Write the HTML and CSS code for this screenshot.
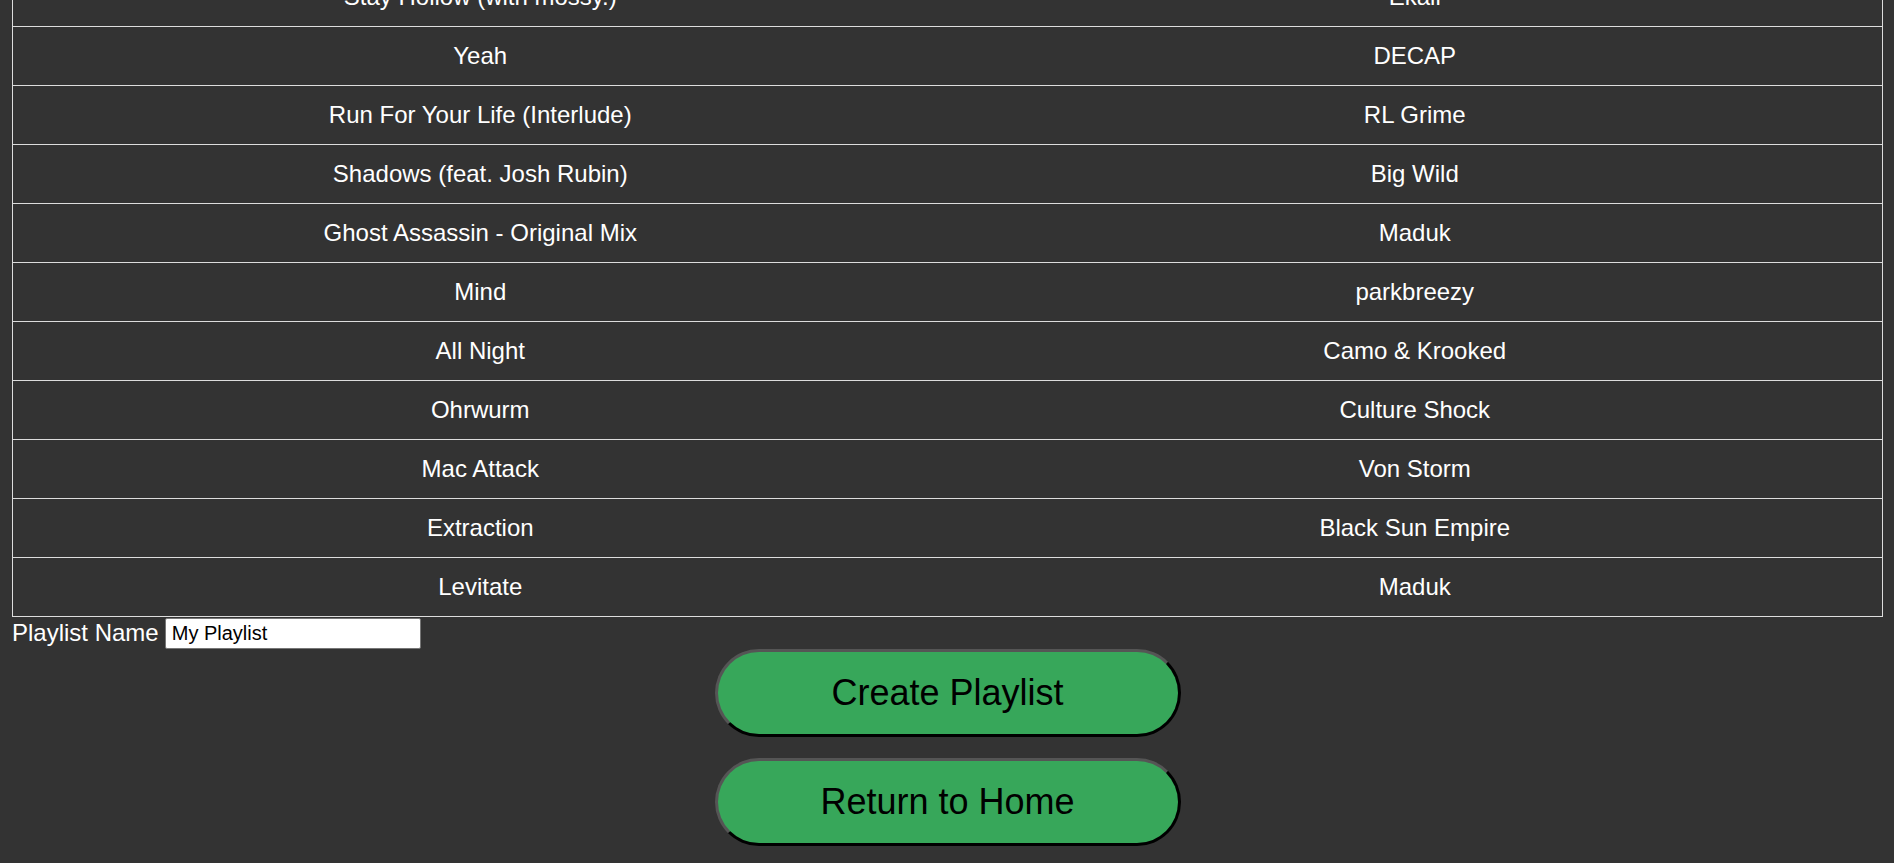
FILE: index.html
```html
<!DOCTYPE html>
<html>
<head>
<meta charset="utf-8">
<title>Playlist</title>
<link rel="stylesheet" href="styles.css">
</head>
<body>
<div class="page">
  <table class="tracks">
    <tbody>
      <tr><td>Stay Hollow (with mossy.)</td><td>Ekali</td></tr>
      <tr><td>Yeah</td><td>DECAP</td></tr>
      <tr><td>Run For Your Life (Interlude)</td><td>RL Grime</td></tr>
      <tr><td>Shadows (feat. Josh Rubin)</td><td>Big Wild</td></tr>
      <tr><td>Ghost Assassin - Original Mix</td><td>Maduk</td></tr>
      <tr><td>Mind</td><td>parkbreezy</td></tr>
      <tr><td>All Night</td><td>Camo &amp; Krooked</td></tr>
      <tr><td>Ohrwurm</td><td>Culture Shock</td></tr>
      <tr><td>Mac Attack</td><td>Von Storm</td></tr>
      <tr><td>Extraction</td><td>Black Sun Empire</td></tr>
      <tr><td>Levitate</td><td>Maduk</td></tr>
    </tbody>
  </table>
  <div class="name-row">
    <label class="name-label" for="pname">Playlist Name</label>
    <input class="name-input" id="pname" type="text" value="My Playlist">
  </div>
  <div class="actions">
    <button class="pill">Create Playlist</button>
    <button class="pill">Return to Home</button>
  </div>
</div>
</body>
</html>
```

FILE: styles.css
```css
html, body {
  margin: 0;
  padding: 0;
  background: #333333;
}
body {
  font-family: "Liberation Sans", Arial, sans-serif;
  font-size: 24px;
  color: #ffffff;
  overflow: hidden;
}
.page {
  padding: 0 11px 0 12px;
}
.tracks {
  width: 100%;
  border-collapse: collapse;
  border: 1px solid #dddddd;
  margin-top: -33px;
  table-layout: fixed;
}
.tracks td {
  width: 50%;
  text-align: center;
  padding: 15px 4px;
  border-bottom: 1px solid #dddddd;
  line-height: 28px;
  white-space: nowrap;
}
.name-row {
  height: 32px;
  display: flex;
  align-items: flex-start;
  gap: 6px;
}
.name-label {
  font-size: 24px;
  line-height: 31px;
}
.name-input {
  box-sizing: border-box;
  width: 256px;
  height: 31px;
  margin: 1px 0 0 0;
  font-family: "Liberation Sans", Arial, sans-serif;
  font-size: 20px;
  padding: 1px 6px;
  border: 1px solid #767676;
  border-radius: 2px;
  background: #ffffff;
  color: #000000;
}
.actions {
  display: flex;
  flex-direction: column;
  align-items: center;
  gap: 21px;
  margin-top: 0;
}
.pill {
  box-sizing: border-box;
  width: 466px;
  height: 88px;
  background: #37a75a;
  color: #000000;
  font-family: "Liberation Sans", Arial, sans-serif;
  font-size: 36px;
  border-width: 3px;
  border-style: solid;
  border-color: #555555 #000000 #000000 #555555;
  border-radius: 44px;
  padding: 0;
}
```
